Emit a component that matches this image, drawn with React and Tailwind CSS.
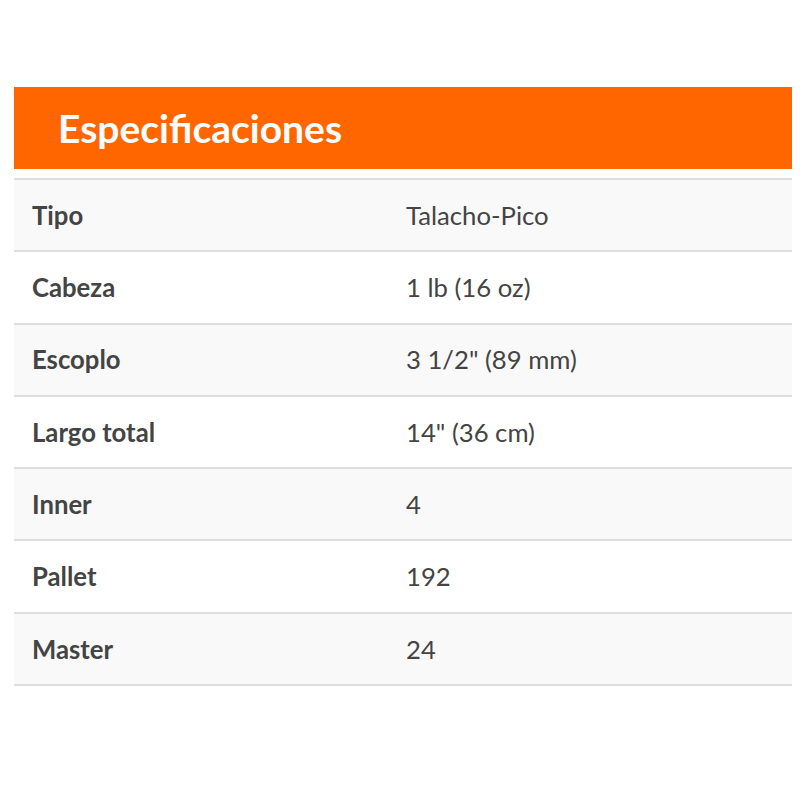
const SPECS = [
  ['Tipo', 'Talacho-Pico'],
  ['Cabeza', '1 lb (16 oz)'],
  ['Escoplo', '3 1/2" (89 mm)'],
  ['Largo total', '14" (36 cm)'],
  ['Inner', '4'],
  ['Pallet', '192'],
  ['Master', '24'],
]

export default function App() {
  return (
    <div className="w-[800px] h-[800px] bg-white pt-[87px] pl-[14px] pr-[8px]" style={{ fontFamily: 'Lato, "Open Sans", sans-serif' }}>
      <div className="bg-[#ff6600] h-[82px] flex items-center pl-[44px]">
        <h2 className="text-white text-[39px] font-bold leading-none pt-[1px]">Especificaciones</h2>
      </div>
      <table className="w-full mt-[9px] border-collapse border-t-2 border-[#dedede]">
        <tbody>
          {SPECS.map(([label, value], i) => (
            <tr key={label} className={`h-[72.3px] border-b-2 border-[#dedede] ${i % 2 === 0 ? 'bg-[#f9f9f9]' : 'bg-white'}`}>
              <td className="pl-[18px] w-[392px] text-[25.7px] font-bold text-[#444]">{label}</td>
              <td className="text-[25.7px] text-[#444]">{value}</td>
            </tr>
          ))}
        </tbody>
      </table>
    </div>
  )
}
